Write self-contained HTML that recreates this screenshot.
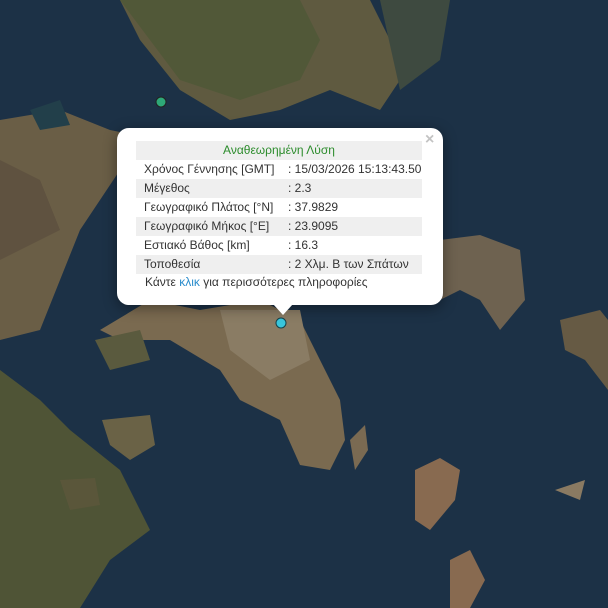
<!DOCTYPE html>
<html><head><meta charset="utf-8"><style>
body{margin:0;width:608px;height:608px;overflow:hidden;background:#1d3349;font-family:"Liberation Sans",sans-serif}
svg{position:absolute;left:0;top:0}
.pop{position:absolute;left:117px;top:128px;width:326px;height:177px;background:#fff;border-radius:12px;box-shadow:0 3px 14px rgba(0,0,0,.4)}
.tip{position:absolute;left:273px;top:304px;width:0;height:0;border-left:10px solid transparent;border-right:10px solid transparent;border-top:11px solid #fff}
.x{position:absolute;left:425px;top:131px;color:#c3c3c3;font:bold 16px "Liberation Sans",sans-serif}
table{position:absolute;left:136px;top:141px;width:286px;border-collapse:collapse;font-size:12px;color:#333}
td{height:19px;line-height:19px;padding:0 0 0 8px;white-space:nowrap}
tr.g td{background:#efefef}
.lnk{position:absolute;left:145px;top:275px;font-size:12px;color:#333}
</style></head><body>
<svg width="608" height="608" viewBox="0 0 608 608">
<rect width="608" height="608" fill="#1c3146"/>
<path d="M0 0H120L140 40 180 90 230 120 280 110 330 90 380 110 400 80 390 40 370 0H0Z" fill="#5f5a40"/>
<path d="M0 0H300L320 40 300 80 240 100 180 80 150 40 120 0Z" fill="#515838"/>
<path d="M0 120L60 110 110 130 160 140 120 170 80 230 40 330 0 340Z" fill="#6a5e46"/>
<path d="M0 160L40 180 60 230 0 260Z" fill="#5f5240"/>
<path d="M0 370L40 400 70 430 120 470 150 530 110 560 80 608H0Z" fill="#4f5436"/>
<path d="M150 300L200 310 260 300 300 320 320 360 340 400 345 440 330 470 300 465 280 420 240 400 220 370 170 340 120 340 100 330Z" fill="#7a6a50"/>
<path d="M220 310L300 310 310 360 270 380 230 350Z" fill="#8a7c64"/>
<path d="M95 340L140 330 150 360 110 370Z" fill="#5a5a3e"/>
<path d="M102 420L150 415 155 445 130 460 110 445Z" fill="#6a6246"/>
<path d="M380 0H450L440 60 400 90Z" fill="#3e4a40"/>
<path d="M440 240L480 235 520 250 525 300 500 330 480 300 460 290 440 300Z" fill="#6e6250"/>
<path d="M560 320L600 310 608 320V390L585 360 565 350Z" fill="#665a44"/>
<path d="M415 470L440 458 460 470 455 500 430 530 415 520Z" fill="#886a50"/>
<path d="M350 440L365 425 368 450 355 470Z" fill="#7a6a52"/>
<path d="M450 560L470 550 485 580 470 608H450Z" fill="#886a50"/>
<path d="M555 490L585 480 580 500Z" fill="#8a7a62"/>
<path d="M60 480L95 478 100 505 70 510Z" fill="#5a563a"/>
<path d="M30 110L60 100 70 125 40 130Z" fill="#223f4a"/>
<circle cx="161" cy="102" r="5" fill="#2ea878" stroke="#222" stroke-width="1"/>
<circle cx="281" cy="323" r="5" fill="#39c6dc" stroke="#14424a" stroke-width="1"/>
</svg>
<div class="pop"></div><div class="tip"></div>
<div class="x">×</div>
<table>
<tr class="g"><td colspan="2" style="text-align:center;color:#2c8c2c;padding:0">Αναθεωρημένη Λύση</td></tr>
<tr><td style="width:140px">Χρόνος Γέννησης [GMT]</td><td style="padding-left:4px">: 15/03/2026 15:13:43.50</td></tr>
<tr class="g"><td>Μέγεθος</td><td style="padding-left:4px">: 2.3</td></tr>
<tr><td>Γεωγραφικό Πλάτος [°N]</td><td style="padding-left:4px">: 37.9829</td></tr>
<tr class="g"><td>Γεωγραφικό Μήκος [°E]</td><td style="padding-left:4px">: 23.9095</td></tr>
<tr><td>Εστιακό Βάθος [km]</td><td style="padding-left:4px">: 16.3</td></tr>
<tr class="g"><td>Τοποθεσία</td><td style="padding-left:4px">: 2 Χλμ. Β των Σπάτων</td></tr>
</table>
<div class="lnk">Κάντε <span style="color:#2a8ccc">κλικ</span> για περισσότερες πληροφορίες</div>
</body></html>
